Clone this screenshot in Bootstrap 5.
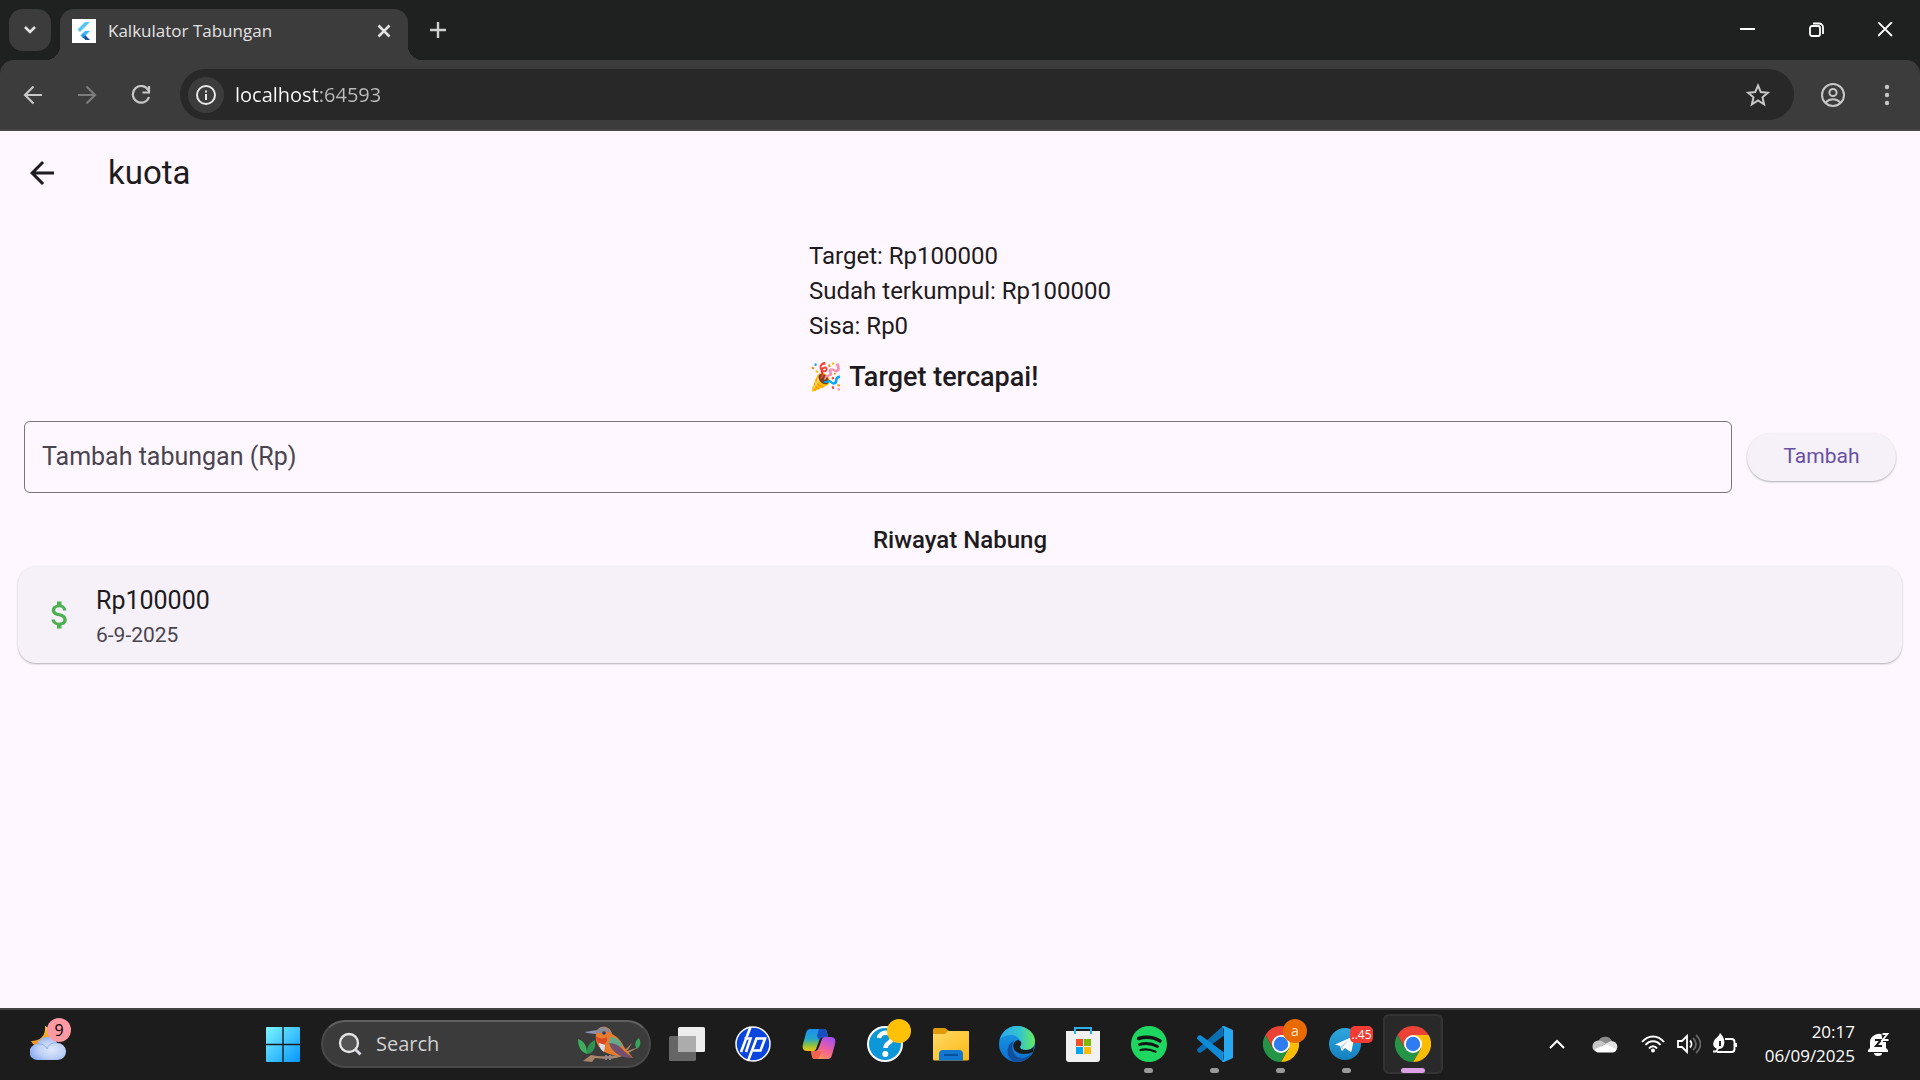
<!DOCTYPE html>
<html lang="id">
<head>
<meta charset="utf-8">
<meta name="viewport" content="width=device-width, initial-scale=1">
<title>Kalkulator Tabungan</title>
<link href="https://cdn.jsdelivr.net/npm/bootstrap@5.3.0/dist/css/bootstrap.min.css" rel="stylesheet">
<style>
  :root { --ui: "Open Sans", "Noto Sans", sans-serif; --app: Roboto, sans-serif; --chrome: #3c3c3c; --ink: #1d1b20; --ink-soft: #49454f; --surface: #fef7ff; --raised: #f6f1f8; }
  body { font-family: var(--ui); background: var(--surface); color: var(--ink); overflow: hidden; }
  button, input { font-family: inherit; }
  svg { display: block; flex: none; }
  .bare { border: 0; background: none; padding: 0; color: inherit; display: flex; align-items: center; justify-content: center; }

  /* Browser window */
  .tab-strip { background: #1f2120; height: 60px; color: #e3e3e3; }
  .tab-search { width: 42px; height: 42px; border-radius: 14px; background: var(--chrome); margin: 9px 9px 9px 9px; }
  .tab-open { position: relative; width: 348px; height: 51px; margin-top: 9px; padding: 0 16px 8px 12px; border-radius: 14px 14px 0 0; background: var(--chrome); font-size: 17px; line-height: 24px; }
  .tab-open::before, .tab-open::after { content: ""; position: absolute; bottom: 0; width: 14px; height: 14px; }
  .tab-open::before { right: 100%; background: radial-gradient(circle at 0 0, transparent 14px, var(--chrome) 14px); }
  .tab-open::after { left: 100%; background: radial-gradient(circle at 100% 0, transparent 14px, var(--chrome) 14px); }
  .tab-new { width: 60px; height: 60px; }
  .win-btn { width: 69px; height: 60px; color: #fff; }
  .toolbar-wrap { background: #1f2120; }
  .toolbar { height: 71px; background: var(--chrome); border-bottom: 2px solid #474747; border-radius: 14px 14px 0 0; color: #c7c7c7; padding: 0 6px; }
  .nav-btn { width: 54px; height: 48px; }
  .omnibox { height: 51px; border-radius: 26px; background: #282828; padding: 0 18px 0 8px; margin: 0 12px; }
  .site-info { width: 36px; height: 36px; border-radius: 50%; background: var(--chrome); color: #e8e8e8; }
  .address { border: 0; outline: 0; margin-left: 11px; padding: 0; font-size: 20px; line-height: 30px; color: transparent; background: linear-gradient(90deg, #fff 84px, #bdbdbd 84px); -webkit-background-clip: text; background-clip: text; min-width: 0; }

  /* Savings app */
  .app { font-family: var(--app); }
  .app-bar { height: 84px; padding: 0 24px; gap: 48px; }
  .app-title { font-size: 33px; line-height: 42px; font-weight: 400; }
  .summary { font-size: 24px; line-height: 35px; }
  .reached { font-size: 27px; line-height: 42px; font-weight: 500; margin-top: 12px; }
  .entry-row { padding: 23px 24px 0; gap: 15px; }
  .amount { height: 72px; border: 1px solid #79747e; border-radius: 6px; background: transparent; color: var(--ink); font-size: 24px; padding: 0 18px; }
  .amount-label { position: absolute; inset: 0; display: flex; align-items: center; padding: 0 18px; color: var(--ink-soft); font-size: 25px; pointer-events: none; }
  .amount:focus + .amount-label, .amount:not(:placeholder-shown) + .amount-label { display: none; }
  .add-btn { width: 149px; height: 48px; border-radius: 24px; background: var(--raised); color: #6750a4; font-size: 21px; box-shadow: 0 1px 2px rgba(0,0,0,.3); }
  .history-title { font-size: 24px; line-height: 36px; font-weight: 500; padding-top: 29px; }
  .entry { margin: 8px 18px 0; height: 97px; border: 0; border-radius: 18px; background: var(--raised); box-shadow: 0 1px 2px rgba(0,0,0,.3); padding: 0 24px; gap: 18px; }
  .entry-sum { font-size: 25px; line-height: 36px; }
  .entry-date { font-size: 21px; line-height: 32px; color: var(--ink-soft); }

  /* Desktop taskbar */
  .taskbar { height: 72px; background: #1c1c1c; border-top: 2px solid #434343; padding-bottom: 2px; color: #fff; }
  .weather { width: 60px; height: 60px; margin-left: 18px; }
  .dock { gap: 6px; margin-left: 175px; }
  .task-btn { position: relative; width: 60px; height: 60px; border-radius: 6px; border: 2px solid transparent; }
  .task-btn.running::after { content: ""; position: absolute; bottom: -1px; left: 23px; width: 9px; height: 5px; border-radius: 3px; background: #9a9a9a; }
  .task-btn.current { background: #292929; border-color: #333; }
  .task-btn.current::after { left: 16px; width: 24px; background: #dca0e4; }
  .pip { position: absolute; display: flex; align-items: center; justify-content: center; }
  .pip-count { left: 27px; top: 2px; width: 24px; height: 24px; border-radius: 50%; background: #ff99a4; color: #000; font-size: 16px; }
  .pip-dot { left: 30px; top: 3px; width: 24px; height: 24px; border-radius: 50%; background: #ffc107; }
  .pip-user { left: 30px; top: 3px; width: 24px; height: 24px; border-radius: 50%; background: #e96a00; color: #ffe3cc; font-size: 14px; line-height: 20px; }
  .pip-unread { left: 31px; top: 10px; width: 23px; height: 17px; border-radius: 5px; background: #f23c34; color: #fff; font-size: 12px; line-height: 16px; }
  .find { width: 330px; height: 48px; border-radius: 24px; background: #3b3b3b; border: 2px solid #4a4a4a; border-top-color: #606060; padding: 0 6px 0 15px; gap: 14px; margin-left: 2px; }
  .find input { border: 0; outline: 0; background: none; padding: 0; width: 150px; color: #d0d0d0; font-size: 20px; line-height: 28px; }
  .find input::placeholder { color: #d0d0d0; opacity: 1; }
  .tray { padding-right: 29px; }
  .tray-btn { width: 36px; height: 60px; }
  .tray-cloud { margin: 0 12px; }
  .clock { font-size: 17px; line-height: 24px; text-align: right; margin: 0 12px 0 22px; }
</style>
</head>
<body class="d-flex flex-column vh-100">

<header>
  <div class="tab-strip d-flex">
    <button class="bare tab-search" aria-label="Cari tab"><svg width="16" height="16" viewBox="0 0 16 16" fill="none" stroke="currentColor" stroke-width="2.6"><path d="M3 5l5 5 5-5"/></svg></button>
    <div class="tab-open d-flex align-items-center">
      <svg width="24" height="24" viewBox="0 0 24 24"><path fill="#fff" d="M0 0h24v24H0z"/><path d="M13 3h5L8 13l-2.500-2.500z" fill="#54c5f8"/><path d="M13 12h5l-5 5-2.500-2.500z" fill="#3fb6f3"/><path d="M8.500 16.500l2.500-2.500 3 3-2.500 2.500z" fill="#29a5e8"/><path d="M11 18l2.500-1.500L18 21h-4.500z" fill="#1c4fa0"/></svg>
      <span class="ms-2 ps-1 flex-grow-1">Kalkulator Tabungan</span>
      <button class="bare" aria-label="Tutup tab"><svg width="16" height="16" viewBox="0 0 16 16" stroke="currentColor" stroke-width="2.500"><path d="M2.500 2.500l11 11M13.500 2.500l-11 11"/></svg></button>
    </div>
    <button class="bare tab-new" aria-label="Tab baru"><svg width="16" height="16" viewBox="0 0 16 16" stroke="#d0d0d0" stroke-width="2.400"><path d="M8 0v16M0 8h16"/></svg></button>
    <div class="ms-auto d-flex">
      <button class="bare win-btn" aria-label="Kecilkan"><svg width="16" height="16" viewBox="0 0 16 16" stroke="currentColor" stroke-width="2"><path d="M0 7h15"/></svg></button>
      <button class="bare win-btn" aria-label="Pulihkan"><svg width="16" height="16" viewBox="0 0 16 16" fill="none" stroke="currentColor" stroke-width="1.800"><rect x="1" y="4" width="10" height="10" rx="2"/><path d="M4 1.500h6a4 4 0 0 1 4 4V12"/></svg></button>
      <button class="bare win-btn" aria-label="Tutup"><svg width="16" height="16" viewBox="0 0 16 16" stroke="currentColor" stroke-width="1.800"><path d="M0 0l14 14M14 0L0 14"/></svg></button>
    </div>
  </div>
  <div class="toolbar-wrap">
    <div class="toolbar d-flex align-items-center">
      <button class="bare nav-btn" aria-label="Kembali"><svg width="20" height="20" viewBox="0 0 20 20" fill="none" stroke="currentColor" stroke-width="2.200"><path d="M19 10H2.500M10.500 1.500L2 10l8.500 8.500"/></svg></button>
      <button class="bare nav-btn" aria-label="Maju"><svg width="20" height="20" viewBox="0 0 20 20" fill="none" stroke="#7c7c7c" stroke-width="2.200"><path d="M1 10h16.500M9.500 1.500L18 10l-8.500 8.500"/></svg></button>
      <button class="bare nav-btn" aria-label="Muat ulang"><svg width="20" height="20" viewBox="0 0 20 20" fill="none" stroke="currentColor" stroke-width="2.200"><path d="M17.500 5.500A8.300 8.300 0 1 0 18 12"/><path d="M18 1v6.500h-6.500"/></svg></button>
      <div class="omnibox d-flex align-items-center flex-grow-1">
        <button class="bare site-info" aria-label="Info situs"><svg width="20" height="20" viewBox="0 0 20 20" fill="none" stroke="currentColor" stroke-width="2"><circle cx="10" cy="10" r="9"/><path d="M10 9v6M10 5.500v2"/></svg></button>
        <input class="address flex-grow-1" type="text" value="localhost:64593" aria-label="Alamat">
        <button class="bare" aria-label="Tandai halaman"><svg width="36" height="36" viewBox="0 0 36 36" fill="none" stroke="currentColor" stroke-width="2"><path d="M18 8.500l2.800 6.600 7 .6-5.300 4.600 1.600 7L18 23.500l-6.100 3.800 1.600-7-5.300-4.600 7-.6z"/></svg></button>
      </div>
      <button class="bare nav-btn" aria-label="Profil"><svg width="24" height="24" viewBox="0 0 24 24" fill="none" stroke="currentColor" stroke-width="2"><circle cx="12" cy="12" r="11"/><circle cx="12" cy="9.500" r="3.600"/><path d="M4.500 19.500c4.500-4.200 10.500-4.200 15 0"/></svg></button>
      <button class="bare nav-btn" aria-label="Menu"><svg width="6" height="24" viewBox="0 0 6 24" fill="currentColor"><circle cx="3" cy="4" r="2.200"/><circle cx="3" cy="12" r="2.200"/><circle cx="3" cy="20" r="2.200"/></svg></button>
    </div>
  </div>
</header>

<main class="app flex-grow-1 overflow-hidden">
  <div class="app-bar d-flex align-items-center">
    <a class="link-dark" href="#" aria-label="Kembali"><svg width="36" height="36" viewBox="0 0 24 24" fill="#1d1b20"><path d="M20 11H7.830l5.590-5.590L12 4l-8 8 8 8 1.410-1.410L7.830 13H20v-2z"/></svg></a>
    <h1 class="app-title m-0">kuota</h1>
  </div>
  <div class="d-flex justify-content-center pt-4">
    <div>
      <p class="summary m-0">Target: Rp100000</p>
      <p class="summary m-0">Sudah terkumpul: Rp100000</p>
      <p class="summary m-0">Sisa: Rp0</p>
      <p class="reached mb-0">🎉 Target tercapai!</p>
    </div>
  </div>
  <form class="entry-row d-flex align-items-center">
    <div class="position-relative flex-grow-1">
      <input class="amount w-100 d-block" id="amount" type="text" inputmode="numeric" placeholder=" ">
      <label class="amount-label" for="amount">Tambah tabungan (Rp)</label>
    </div>
    <button class="bare add-btn" type="button">Tambah</button>
  </form>
  <h2 class="history-title text-center m-0">Riwayat Nabung</h2>
  <div class="card entry flex-row align-items-center">
    <svg width="36" height="36" viewBox="0 0 24 24" fill="#4caf50"><path d="M11.800 10.900c-2.270-.59-3-1.200-3-2.150 0-1.090 1.010-1.850 2.700-1.850 1.780 0 2.440.85 2.500 2.100h2.210c-.07-1.720-1.120-3.300-3.210-3.810V3h-3v2.160c-1.940.42-3.500 1.680-3.500 3.610 0 2.310 1.910 3.460 4.700 4.130 2.500.6 3 1.480 3 2.410 0 .69-.49 1.790-2.700 1.790-2.060 0-2.870-.92-2.980-2.100h-2.200c.12 2.190 1.760 3.420 3.680 3.830V21h3v-2.150c1.950-.37 3.500-1.500 3.500-3.550 0-2.840-2.430-3.810-4.700-4.400z"/></svg>
    <div class="pt-1">
      <div class="entry-sum">Rp100000</div>
      <div class="entry-date">6-9-2025</div>
    </div>
  </div>
</main>

<footer class="taskbar d-flex align-items-center">
  <svg width="0" height="0" class="position-absolute" aria-hidden="true">
    <defs>
      <linearGradient id="win" x2="1" y2="1" ><stop stop-color="#7df6ff"/><stop offset="1" stop-color="#0595ff"/></linearGradient>
      <linearGradient id="moon" x2="0" y2="1"><stop stop-color="#f8c531"/><stop offset="1" stop-color="#f08a1c"/></linearGradient>
      <radialGradient id="cloud" cx=".6" cy=".55" r=".6"><stop stop-color="#dfe9fb"/><stop offset=".6" stop-color="#bcd0f6"/><stop offset="1" stop-color="#8daef0"/></radialGradient>
      <linearGradient id="folder" x2="1" y2="1"><stop stop-color="#ffd966"/><stop offset="1" stop-color="#fbb915"/></linearGradient>
      <linearGradient id="copA" x2="0" y2="1"><stop stop-color="#1d8ff2"/><stop offset=".45" stop-color="#26a6c9"/><stop offset=".75" stop-color="#8fc23c"/><stop offset="1" stop-color="#f5c518"/></linearGradient>
      <linearGradient id="copB" x1=".7" x2=".2" y2="1"><stop stop-color="#a84ef0"/><stop offset=".5" stop-color="#f0609a"/><stop offset="1" stop-color="#ff9a4d"/></linearGradient>
      <linearGradient id="edgeA" x2="1"><stop stop-color="#2aa8ee"/><stop offset=".55" stop-color="#33c3cf"/><stop offset="1" stop-color="#66eb5e"/></linearGradient>
      <linearGradient id="edgeB" x2="0" y2="1"><stop stop-color="#1b9de8"/><stop offset="1" stop-color="#0b6fce"/></linearGradient>
      <linearGradient id="tele" x2="0" y2="1"><stop stop-color="#2fa7df"/><stop offset="1" stop-color="#1580be"/></linearGradient>
      <symbol id="chrome" viewBox="0 0 36 36"><path fill="#ea4335" d="M18 0a18 18 0 0 1 15.600 9H18L10.200 22.500 2.400 9A18 18 0 0 1 18 0z"/><path fill="#fbbc04" d="M33.600 9A18 18 0 0 1 18 36l7.800-13.500L18 9z"/><path fill="#249446" d="M2.400 9a18 18 0 0 0 15.600 27l7.800-13.500-7.800 3-7.800-3z"/><circle cx="18" cy="18" r="9" fill="#fff"/><circle cx="18" cy="18" r="7.200" fill="#2f7bf0"/></symbol>
    </defs>
  </svg>

  <button class="bare task-btn weather" aria-label="Cuaca">
    <svg width="36" height="36" viewBox="0 0 36 36"><path d="M15 0c1 10-5 15-14 15 2 4 6 6 11 6 7 0 12-5 12-10S19 2 15 0z" fill="url(#moon)"/><path d="M8 34a8 8 0 0 1-1-16 11 11 0 0 1 20-1 8.500 8.500 0 0 1 1 17z" fill="url(#cloud)"/><path d="M7 18c5-1 9 2 10 5 1-4 5-7 10-6" fill="none" stroke="#8eaaea" stroke-width="1"/></svg>
    <span class="pip pip-count">9</span>
  </button>

  <div class="dock d-flex align-items-center">
    <button class="bare task-btn" aria-label="Start"><svg width="36" height="36" viewBox="0 0 36 36"><path fill="url(#win)" d="M2 1h32a1 1 0 0 1 1 1v33a1 1 0 0 1-1 1H2a1 1 0 0 1-1-1V2a1 1 0 0 1 1-1z"/><path d="M18 1v35M1 18.500h35" stroke="#1c1c1c" stroke-width="1.400"/></svg></button>
    <div class="find d-flex align-items-center">
      <svg width="24" height="24" viewBox="0 0 24 24" fill="none"><circle cx="11" cy="11" r="9" fill="#555" stroke="#e6e6e6" stroke-width="2.300"/><path d="M17.500 17.500l5 5" stroke="#d8d8e0" stroke-width="3"/></svg>
      <input type="search" placeholder="Search" aria-label="Search">
      <svg class="ms-auto" width="66" height="36" viewBox="0 0 66 36"><path d="M6 35l8-6c10 2 24 2 33-3l15-5-14 8c-9 5-22 4-30 3l-3 4z" fill="#a88569"/><path d="M47 25l8-8-4 7" fill="#a88569"/><path d="M1 13c6 2 9 7 9 15-6-2-9-7-9-15z" fill="#3fae5c"/><path d="M18 14c-6 3-9 8-8 14 7-1 9-7 8-14z" fill="#2c9450"/><path d="M62 12c-4 3-5 7-2 11 4-3 4-7 2-11z" fill="#36a558"/><path d="M19 8c1-9 14-10 16 0 6 3 10 8 12 13l9 11-10-2c-8-1-17-1-22-7-4-4-6-9-5-15z" fill="#e77d2c"/><path d="M19 6c2-6 12-8 16 2-3-3-7-3-9-2s-5 2-7 0z" fill="#8d8b94"/><path d="M8 6l12-2-1 4-9-1z" fill="#8f93b5"/><circle cx="27" cy="7" r="1.800" fill="#243b7a"/><path d="M19 10c2 3 9 3 11 1 1 6-3 8-6 7s-5-4-5-8z" fill="#d94a24"/><path d="M22 17l6 2-1 7c-3-2-5-5-5-9z" fill="#dcdff0"/><path d="M33 11c7 0 11 4 13 10l-14-3z" fill="#66a98a"/><path d="M32 17c7 0 12 4 15 8l9 7c-10 0-21-4-24-15z" fill="#75506c"/><path d="M29 29v5M33 29v5" stroke="#8f8596" stroke-width="2"/></svg>
    </div>
    <button class="bare task-btn" aria-label="Tampilan tugas"><svg width="36" height="36" viewBox="0 0 36 36"><rect x="9" y="1" width="27" height="25" rx="1.500" fill="#ededed"/><rect y="10" width="27" height="25" rx="1.500" fill="#666"/><path d="M9 10h18v16H9z" fill="#acacac"/></svg></button>
    <button class="bare task-btn" aria-label="HP"><svg width="36" height="36" viewBox="0 0 36 36"><circle cx="18" cy="18" r="17" fill="#0b45e0" stroke="#fff" stroke-width="1.500"/><g fill="none" stroke="#fff" stroke-width="2.600"><path d="M15.500 1L6 26M9.500 12.500h6L11 26M21.500 12.500L13 35M20.500 12.500H30L25.500 24.500h-8"/></g></svg></button>
    <button class="bare task-btn" aria-label="Copilot"><svg width="36" height="36" viewBox="0 0 36 36"><path d="M9 3h14c3 0 3 3 4 8h-4c-3 0-4 1-5 4l-3 8c-1 2-2 2-4 2H6c-4 0-5-3-4-7L5 7c1-3 2-4 4-4z" fill="url(#copA)"/><path d="M18 3h5c3 0 3 3 4 8h-4c-3 0-4 1-5 3l-2-4z" fill="#174fc0"/><path d="M27 33H14c-3 0-3-3-4-8h3c3 0 4-1 5-4l3-8c1-2 2-2 4-2h5c4 0 5 3 4 7l-3 11c-1 3-2 4-4 4z" fill="url(#copB)"/><path d="M16 25h-6c1 5 1 8 4 8h3l4-8z" fill="#f0644e"/></svg></button>
    <button class="bare task-btn" aria-label="Bantuan"><svg width="36" height="36" viewBox="0 0 36 36"><circle cx="18" cy="18" r="17" fill="#0c98d8" stroke="#fff" stroke-width="2"/><path d="M12 12c1-7 13-7 13 0 0 5-6.500 4.500-6.500 10" fill="none" stroke="#fff" stroke-width="4.400"/><circle cx="18.300" cy="28" r="3" fill="#fff"/></svg><span class="pip pip-dot"></span></button>
    <button class="bare task-btn" aria-label="File Explorer"><svg width="36" height="36" viewBox="0 0 36 36"><path d="M0 4a2 2 0 0 1 2-2h10l4 3v5H0z" fill="#e09c08"/><path d="M0 8h12l3-3h20a1 1 0 0 1 1 1v27a1.500 1.500 0 0 1-1.500 1.500h-33A1.500 1.500 0 0 1 0 33z" fill="url(#folder)"/><path d="M6 34.500V28a4 4 0 0 1 4-4h16a4 4 0 0 1 4 4v6.500z" fill="#1277d0"/><path d="M11 29h14" stroke="#0a4d91" stroke-width="1.800"/></svg></button>
    <button class="bare task-btn" aria-label="Edge"><svg width="36" height="36" viewBox="0 0 36 36"><circle cx="18" cy="18" r="18" fill="url(#edgeB)"/><path d="M1 13C4 4 11 0 18 0c10 0 18 7 18 15 0 6-4 9-9 9-4 0-6-1-6-3 0-1 2-2 1-5-2-5-6-7-10-7-5 0-9 2-11 4z" fill="url(#edgeA)"/><path d="M15 15c-3 5-2 10 2 15 5 4 11 2 16-3-3 6-9 9-15 9-7-1-11-8-9-14 1-4 3-6 6-7z" fill="#104f9c"/><path d="M19 14c-4 1-6 5-4 9 3 6 13 6 19 3l1-6c-2 3-5 4-8 4-4 0-6-1-6-3 0-1 2-2 1-5-1-1-2-2-3-2z" fill="#1c1c1c"/></svg></button>
    <button class="bare task-btn" aria-label="Microsoft Store"><svg width="36" height="36" viewBox="0 0 36 36"><path d="M1 5h34v28a3 3 0 0 1-3 3H4a3 3 0 0 1-3-3z" fill="#f1f1f1"/><path d="M10 8V2h16v6" fill="none" stroke="#2cb1ee" stroke-width="2"/><path fill="#f25022" d="M11 13h7v7h-7z"/><path fill="#7fba00" d="M19 13h7v7h-7z"/><path fill="#00a4ef" d="M11 21h7v7h-7z"/><path fill="#ffb900" d="M19 21h7v7h-7z"/></svg></button>
    <button class="bare task-btn running" aria-label="Spotify"><svg width="36" height="36" viewBox="0 0 36 36"><circle cx="18" cy="18" r="18" fill="#1ed760"/><g fill="none" stroke="#151515" stroke-linecap="round"><path d="M7.500 12.500c7-2 15-1.500 21.500 2.500" stroke-width="3.400"/><path d="M8.500 18.500c6-1.700 12.500-1 18 2" stroke-width="2.800"/><path d="M9.500 24c5-1.300 10-.8 15 1.800" stroke-width="2.300"/></g></svg></button>
    <button class="bare task-btn running" aria-label="Visual Studio Code"><svg width="36" height="36" viewBox="0 0 36 36"><path d="M27 9.500L4 26.500c-1 .6-2 .5-3-.5l-.5-1c-.7-.7-.7-1.500 0-2.300L26 0z" fill="#0b6db2"/><path d="M27 26.500L4 9.500c-1-.6-2-.5-3 .5l-.5 1c-.7.700-.7 1.500 0 2.300L26 36z" fill="#0f8bd8"/><path d="M27 0l8 3.500c.7.300 1 .8 1 1.500v26c0 .7-.3 1.200-1 1.500L27 36c-1 0-1.500-.5-2-1l2-2V3l-2-2c.5-.5 1-1 2-1z" fill="#29a8f2"/></svg></button>
    <button class="bare task-btn running" aria-label="Chrome"><svg width="36" height="36"><use href="#chrome"/></svg><span class="pip pip-user">a</span></button>
    <button class="bare task-btn running" aria-label="Telegram"><svg width="36" height="36" viewBox="0 0 36 36"><circle cx="16" cy="18" r="16" fill="url(#tele)"/><path d="M6 18.500L24 10.500c1-.4 1.500 0 1.300 1L22.500 25c-.2 1-.9 1.200-1.700.6L16 22l-2.500 2.500c-.6.500-1 .2-1.100-.4L11 20z" fill="#fff"/><path d="M11.500 20L21 13.500l-7 7-.8 4z" fill="#b9d9ec"/></svg><span class="pip pip-unread">..45</span></button>
    <button class="bare task-btn running current" aria-label="Chrome aktif"><svg width="36" height="36"><use href="#chrome"/></svg></button>
  </div>

  <div class="tray d-flex align-items-center ms-auto">
    <button class="bare tray-btn" aria-label="Ikon tersembunyi"><svg width="18" height="12" viewBox="0 0 18 12" fill="none" stroke="currentColor" stroke-width="2"><path d="M2 10l7-7 7 7"/></svg></button>
    <button class="bare tray-btn tray-cloud" aria-label="OneDrive"><svg width="26" height="18" viewBox="0 0 26 18"><path d="M6 7a7.500 7.500 0 0 1 14-1l-7 6z" fill="#8a8a8a"/><path d="M6.500 5.500c3 0 5 1 7 3L3 16c-4-2-3.500-10 3.500-10.500z" fill="#c6c6c6"/><path d="M13 9l6-3c7 0 8 8 4 10z" fill="#e2e2e2"/><path d="M2.500 14.500L14 9l10.500 5.500c-.5 2-2 3-4 3H6c-1.500 0-3-1-3.500-3z" fill="#fff"/></svg></button>
    <button class="bare tray-btn" aria-label="Wi-Fi"><svg width="24" height="20" viewBox="0 0 24 20" fill="none" stroke="currentColor" stroke-width="2"><path d="M1 8c6-7.500 16-7.500 22 0M4.500 11c4-5 11-5 15 0M8 14.500c2-3 6-3 8 0"/><circle cx="12" cy="16.500" r="2" fill="currentColor" stroke="none"/></svg></button>
    <button class="bare tray-btn" aria-label="Volume"><svg width="24" height="20" viewBox="0 0 24 20" fill="none" stroke="currentColor" stroke-width="1.800"><path d="M1 7h4l5-5v16l-5-5H1z"/><path d="M13 6.500c2 2 2 5 0 7"/><path d="M16 4c4 3.500 4 8.500 0 12M19 1c6 5.500 6 12.500 0 18" stroke="#666"/></svg></button>
    <button class="bare tray-btn" aria-label="Baterai"><svg width="26" height="22" viewBox="0 0 26 22" fill="none" stroke="currentColor" stroke-width="1.900"><path d="M13 6h6.500a3 3 0 0 1 3 3v7a3 3 0 0 1-3 3H5"/><path d="M23 10h2v4h-2z" fill="currentColor" stroke="none"/><path d="M8 0c4 4 5 8 4 12-1 3-3 4-6 4-4-1-6-4-4-8 1-3 5-4 6-8z" fill="currentColor" stroke="none"/><path d="M7 14L4 18.500H1"/><path d="M8 8v5" stroke="#1c1c1c"/></svg></button>
    <div class="clock"><div>20:17</div><div>06/09/2025</div></div>
    <button class="bare" aria-label="Notifikasi"><svg width="24" height="24" viewBox="0 0 24 24"><path d="M3 10a9 8 0 0 1 15-6l1 3v9l2 2v2H1v-2l2-2z" fill="#fff"/><path d="M7 21h8a4 3 0 0 1-8 0z" fill="#fff"/><path d="M8 8h6l-5 6h6" fill="none" stroke="#1c1c1c" stroke-width="2"/><path d="M14 0h8v10h-6z" fill="#1c1c1c"/><path d="M15.500 2h5l-5 6h6" fill="none" stroke="#fff" stroke-width="1.800"/></svg></button>
  </div>
</footer>

<script src="https://cdn.jsdelivr.net/npm/bootstrap@5.3.0/dist/js/bootstrap.bundle.min.js"></script>
</body>
</html>
